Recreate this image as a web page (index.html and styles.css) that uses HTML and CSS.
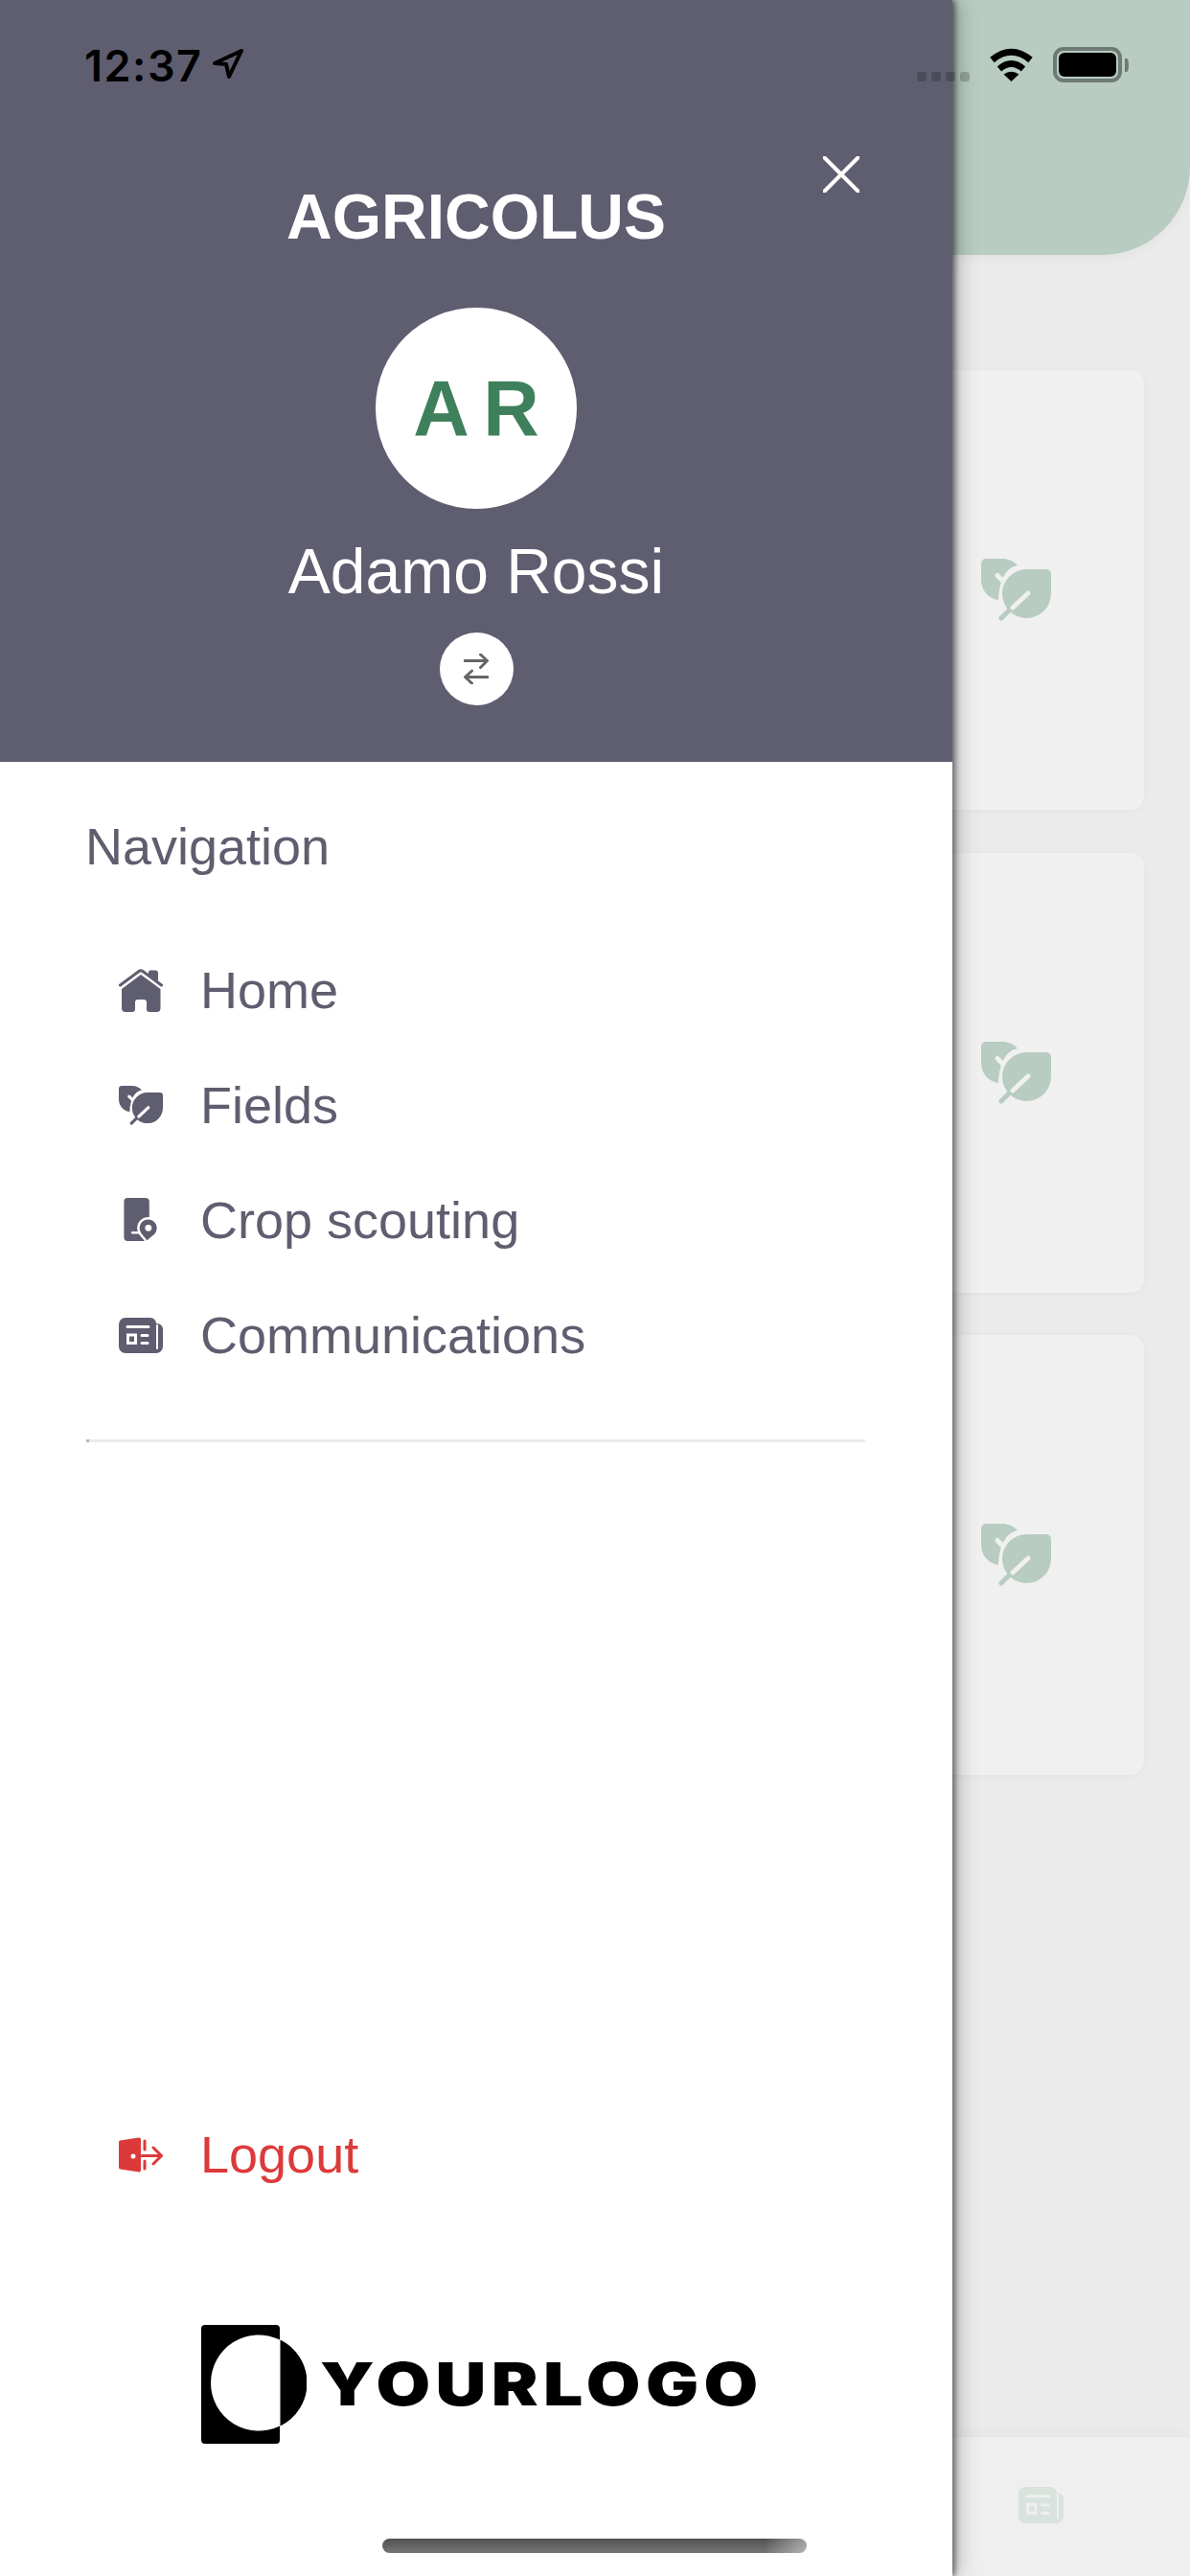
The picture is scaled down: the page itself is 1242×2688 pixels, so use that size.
FILE: index.html
```html
<!DOCTYPE html>
<html lang="en">
<head>
<meta charset="utf-8">
<title>Agricolus</title>
<link rel="stylesheet" href="styles.css">
</head>
<body>
<svg class="defs" width="0" height="0" aria-hidden="true">
  <symbol id="leaves" viewBox="0 0 73 65">
    <path class="fill" d="M5 0H22C28 0 34 2.500 38 7C27 9 19 20 18 43C8 42 0 33 0 22V5A5 5 0 0 1 5 0Z"/>
    <path class="fill" d="M47.500 11H68A5 5 0 0 1 73 16V36.500A25.500 25.500 0 1 1 47.500 11Z"/>
    <path class="cut" d="M17 17.500L22 22.500" stroke-width="5" stroke-linecap="round"/>
    <path class="cut" d="M33 51L49 36" stroke-width="5" stroke-linecap="round"/>
    <path class="ink" d="M29 54L21 62" stroke-width="5" stroke-linecap="round"/>
  </symbol>
  <symbol id="news" viewBox="0 0 46 37">
    <path class="fill" d="M7 0H33A6 6 0 0 1 39 6H40A6 6 0 0 1 46 12V30A7 7 0 0 1 39 37H7A7 7 0 0 1 0 30V7A7 7 0 0 1 7 0Z"/>
    <path class="cut" d="M40 8V32" stroke-width="2" stroke-linecap="round"/>
    <path class="cut" d="M9 9.500H31M24 18.500H30M24 26.500H30" stroke-width="3" stroke-linecap="round"/>
    <rect class="cut" x="9.500" y="18" width="8" height="8.500" fill="none" stroke-width="3"/>
  </symbol>
</svg>

<div class="app">
  <header class="app-head"></header>
  <main class="cards">
    <section class="card"><svg class="leaf-lg"><use href="#leaves"/></svg></section>
    <section class="card"><svg class="leaf-lg"><use href="#leaves"/></svg></section>
    <section class="card"><svg class="leaf-lg"><use href="#leaves"/></svg></section>
  </main>
  <footer class="tabbar"><svg class="tab-news"><use href="#news"/></svg></footer>
</div>

<aside class="drawer">
  <div class="drawer-head">
    <button class="close" aria-label="Close">
      <svg viewBox="0 0 38 38" width="38" height="38"><path d="M1.500 1.500L36.500 36.500M36.500 1.500L1.500 36.500" fill="none" stroke="#fff" stroke-width="4" stroke-linecap="round"/></svg>
    </button>
    <h1 class="brand">AGRICOLUS</h1>
    <div class="avatar">A R</div>
    <div class="user">Adamo Rossi</div>
    <div class="swap">
      <svg viewBox="0 0 26 32" width="26" height="32"><path d="M1 7.500H24M17.500 1L24.500 7.500L17.500 14.500M25 24.500H2M8.500 18L1.500 24.500L8.500 31" fill="none" stroke="#666" stroke-width="3" stroke-linecap="round" stroke-linejoin="round"/></svg>
    </div>
  </div>

  <nav class="drawer-nav">
    <div class="nav-title">Navigation</div>
    <ul class="menu">
      <li class="row">
        <span class="ico">
          <svg viewBox="0 0 46 45" width="46" height="45">
            <path d="M23 6L43.500 21V41A4 4 0 0 1 39.500 45H32A3 3 0 0 1 29 42V35A3 3 0 0 0 26 32H20A3 3 0 0 0 17 35V42A3 3 0 0 1 14 45H7A4 4 0 0 1 3 41V21Z" fill="#5f5e70"/>
            <path d="M1.500 17L21 2.500A3.500 3.500 0 0 1 25 2.500L44.500 17" fill="none" stroke="#5f5e70" stroke-width="3" stroke-linecap="round"/>
            <path d="M31 6V3.500A2 2 0 0 1 33 1.500H38A3 3 0 0 1 41 4.500V13Z" fill="#5f5e70"/>
          </svg>
        </span>
        Home
      </li>
      <li class="row">
        <span class="ico"><svg class="leaf-sm"><use href="#leaves"/></svg></span>
        Fields
      </li>
      <li class="row">
        <span class="ico">
          <svg viewBox="0 0 36 47" width="36" height="46">
            <rect width="27" height="46" rx="4" fill="#5f5e70"/>
            <path d="M9 37H16" stroke="#fff" stroke-width="2.500" stroke-linecap="round"/>
            <path d="M33.400 39.400L24.500 47L17.500 38.500A10.500 10.500 0 1 1 33.400 39.400Z" fill="#5f5e70" stroke="#fff" stroke-width="2.500"/>
            <circle cx="26" cy="32" r="3.500" fill="#fff"/>
          </svg>
        </span>
        Crop scouting
      </li>
      <li class="row">
        <span class="ico"><svg class="news-sm"><use href="#news"/></svg></span>
        Communications
      </li>
    </ul>
    <hr class="divider">
    <div class="spacer"></div>
    <div class="row logout">
      <span class="ico">
        <svg viewBox="0 0 46 37" width="46" height="37">
          <path d="M1.500 3.500L21 .500A2 2 0 0 1 23 2V35A2 2 0 0 1 21 36.500L1.500 33.500A2 2 0 0 1 0 32V5A2 2 0 0 1 1.500 3.500Z" fill="#dc3a3a"/>
          <circle cx="15" cy="20" r="2.500" fill="#fff"/>
          <path d="M27 4V13M27 25V33" stroke="#dc3a3a" stroke-width="3" stroke-linecap="round"/>
          <path d="M24 19.500H44M36 11L44.500 19.500L36 28" fill="none" stroke="#dc3a3a" stroke-width="3" stroke-linecap="round" stroke-linejoin="round"/>
        </svg>
      </span>
      Logout
    </div>
    <div class="logo">
      <svg viewBox="0 0 110 124" width="110" height="124">
        <rect width="82" height="124" rx="4" fill="#000"/>
        <path d="M82 15.600A50 50 0 1 0 82 105.400Z" fill="#fff"/>
        <path d="M82.500 15.600A50 50 0 0 1 82.500 105.400Z" fill="#000"/>
      </svg>
      <span class="logo-text">YOURLOGO</span>
    </div>
  </nav>
</aside>

<div class="statusbar">
  <div class="time-group">
    <span class="time">12:37</span>
    <svg viewBox="0 0 32 31" width="32" height="31"><path d="M2 15L30 2L17 29L14 16Z" fill="none" stroke="#000" stroke-width="4" stroke-linejoin="round"/></svg>
  </div>
  <div class="status-right">
    <div class="dots"><i></i><i></i><i></i><i></i></div>
    <svg viewBox="0 0 47 36" width="47" height="36">
      <path d="M3.500 13.500Q23.500 -3 43.500 13.500" fill="none" stroke="#000" stroke-width="7"/>
      <path d="M11 23Q23.500 12 36 23" fill="none" stroke="#000" stroke-width="6.500"/>
      <path d="M23.500 36L15.500 28.500Q23.500 23 31.500 28.500Z" fill="#000"/>
    </svg>
    <div class="battery"><div class="cell"><b></b></div><span class="nub"></span></div>
  </div>
</div>

<div class="home-indicator"></div>
</body>
</html>
```

FILE: styles.css
```css
* { box-sizing: border-box; }
html, body { margin: 0; padding: 0; }
body {
  position: relative;
  width: 1242px;
  height: 2688px;
  overflow: hidden;
  font-family: "Liberation Sans", Arial, sans-serif;
  background: #ebebeb;
}
.defs { position: absolute; }
.fill { fill: currentColor; }
.ink { stroke: currentColor; fill: none; }
.cut { stroke: var(--cut); }

.app { height: 2688px; display: flex; flex-direction: column; }
.app-head {
  height: 266px;
  background: #b8ccc1;
  border-bottom-right-radius: 92px;
  box-shadow: 0 3px 14px rgba(0, 0, 0, .04);
}
.cards {
  flex: 1;
  display: flex;
  flex-direction: column;
  gap: 44.500px;
  padding: 120px 48px 0;
}
.card {
  height: 459px;
  background: #f0f0f0;
  border-radius: 14px;
  box-shadow: 0 1px 8px rgba(0, 0, 0, .035);
  display: flex;
  justify-content: flex-end;
  align-items: center;
  padding-right: 97px;
  color: #b8ccc1;
  --cut: #f0f0f0;
}
.leaf-lg { width: 73px; height: 65px; }
.tabbar {
  height: 145px;
  background: #efefef;
  box-shadow: 0 -3px 14px rgba(0, 0, 0, .035);
  display: flex;
  align-items: flex-start;
  padding: 52px 0 0 1063px;
  color: #d9e3dd;
  --cut: #efefef;
}
.tab-news { width: 47px; height: 38px; }

.drawer {
  position: absolute;
  left: 0;
  top: 0;
  width: 994px;
  height: 2688px;
  background: #fff;
  display: flex;
  flex-direction: column;
  box-shadow: 3px 0 6px rgba(0, 0, 0, .5), 8px 0 20px rgba(0, 0, 0, .2);
  --cut: #fff;
}
.drawer-head {
  position: relative;
  height: 795px;
  background: #5f5e70;
  padding-top: 188px;
  display: flex;
  flex-direction: column;
  align-items: center;
  color: #fff;
}
.close {
  position: absolute;
  left: 859px;
  top: 163px;
  width: 38px;
  height: 38px;
  padding: 0;
  border: 0;
  background: none;
  display: flex;
}
.brand {
  margin: 0;
  font-size: 66px;
  line-height: 76px;
  font-weight: 700;
}
.avatar {
  margin-top: 57px;
  width: 210px;
  height: 210px;
  border-radius: 50%;
  background: #fff;
  color: #3f805c;
  font-size: 81px;
  font-weight: 700;
  word-spacing: -5px;
  display: flex;
  align-items: center;
  justify-content: center;
}
.user {
  margin-top: 27px;
  font-size: 66px;
  line-height: 76px;
}
.swap {
  margin-top: 26px;
  width: 77px;
  height: 76px;
  border-radius: 50%;
  background: #fff;
  display: flex;
  align-items: center;
  justify-content: center;
}

.drawer-nav {
  flex: 1;
  display: flex;
  flex-direction: column;
  padding-top: 58px;
  color: #5f5e70;
}
.nav-title {
  padding-left: 89px;
  font-size: 54px;
  line-height: 60px;
}
.menu {
  list-style: none;
  margin: 60px 0 0;
  padding: 0;
}
.row {
  height: 120px;
  padding-left: 124px;
  display: flex;
  align-items: center;
  font-size: 54px;
}
.ico {
  width: 46px;
  margin-right: 39px;
  display: flex;
  justify-content: center;
  color: #5f5e70;
}
.leaf-sm { width: 46px; height: 41px; }
.news-sm { width: 46px; height: 37px; }
.divider {
  margin: 49px 91px 0 90px;
  height: 3px;
  border: 0;
  border-left: 3px solid #b5b5b5;
  background: #ececec;
}
.spacer { flex: 1; }
.logout { color: #dc3a3a; }
.logout .ico { color: #dc3a3a; }
.logo {
  margin-top: 118px;
  padding: 0 0 138px 210px;
  display: flex;
  align-items: center;
  gap: 14px;
  color: #000;
}
.logo-text {
  display: inline-block;
  font-family: Inter, "Liberation Sans", sans-serif;
  font-weight: 900;
  font-size: 62px;
  line-height: 1;
  letter-spacing: 4.600px;
  transform: scaleX(1.18);
  transform-origin: left center;
}

.statusbar {
  position: absolute;
  left: 0;
  top: 0;
  width: 1242px;
  padding: 49px 64px 0 88px;
  display: flex;
  justify-content: space-between;
  align-items: flex-start;
  color: #000;
}
.time-group { display: flex; align-items: flex-start; gap: 11px; padding-top: 2px; }
.time {
  font-family: Inter, "Liberation Sans", sans-serif;
  font-weight: 600;
  font-size: 45px;
  line-height: 36px;
  letter-spacing: 1.500px;
}
.status-right { display: flex; align-items: flex-start; gap: 20px; }
.dots { display: flex; gap: 5px; padding-top: 26px; }
.dots i {
  width: 10px;
  height: 10px;
  border-radius: 3px;
  background: rgba(0, 0, 0, .2);
}
.battery { display: flex; align-items: center; gap: 3px; }
.cell {
  width: 72px;
  height: 37px;
  border: 4px solid rgba(0, 0, 0, .4);
  border-radius: 11px;
  padding: 2px;
  display: flex;
}
.cell b { flex: 1; background: #000; border-radius: 6px; }
.nub {
  width: 4px;
  height: 14px;
  background: rgba(0, 0, 0, .4);
  border-radius: 0 100% 100% 0;
}
.home-indicator {
  position: absolute;
  left: 399px;
  bottom: 24px;
  width: 443px;
  height: 15px;
  border-radius: 8px;
  background:
    linear-gradient(to right, rgba(255, 255, 255, 0) 90%, rgba(255, 255, 255, .45)),
    linear-gradient(#505050, #767676);
}
```
